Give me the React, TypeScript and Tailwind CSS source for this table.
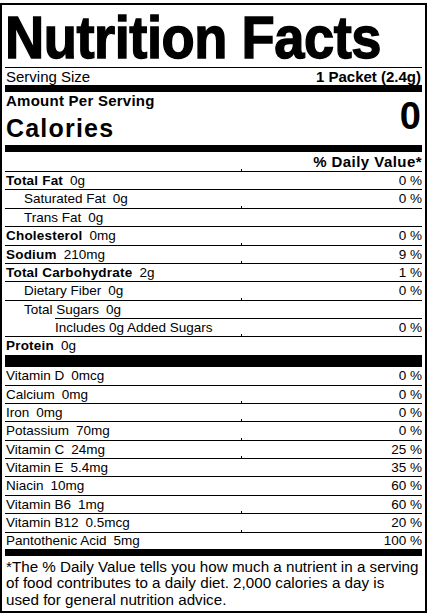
type Row = {
  name: string
  amount?: string
  dv?: string
  bold?: boolean
  indent?: 0 | 1 | 2
  tick?: boolean
}

const nutrients: Row[] = [
  { name: 'Total Fat', amount: '0g', dv: '0 %', bold: true },
  { name: 'Saturated Fat', amount: '0g', dv: '0 %', indent: 1, tick: true },
  { name: 'Trans Fat', amount: '0g', indent: 1 },
  { name: 'Cholesterol', amount: '0mg', dv: '0 %', bold: true, tick: true },
  { name: 'Sodium', amount: '210mg', dv: '9 %', bold: true, tick: true },
  { name: 'Total Carbohydrate', amount: '2g', dv: '1 %', bold: true },
  { name: 'Dietary Fiber', amount: '0g', dv: '0 %', indent: 1, tick: true },
]

const vitamins: Row[] = [
  { name: 'Vitamin D', amount: '0mcg', dv: '0 %' },
  { name: 'Calcium', amount: '0mg', dv: '0 %', tick: true },
  { name: 'Iron', amount: '0mg', dv: '0 %', tick: true },
  { name: 'Potassium', amount: '70mg', dv: '0 %', tick: true },
  { name: 'Vitamin C', amount: '24mg', dv: '25 %', tick: true },
  { name: 'Vitamin E', amount: '5.4mg', dv: '35 %' },
  { name: 'Niacin', amount: '10mg', dv: '60 %' },
  { name: 'Vitamin B6', amount: '1mg', dv: '60 %', tick: true },
  { name: 'Vitamin B12', amount: '0.5mcg', dv: '20 %', tick: true },
]

const Tick = () => <span className="absolute left-[236px] bottom-0 w-px h-[2px] bg-black" />

const NutrientRow = ({ row }: { row: Row }) => (
  <div
    className={`relative flex justify-between items-center h-[18.4px] leading-[17.4px] text-[13.5px] border-b border-black ${
      row.indent === 1 ? 'pl-[19px]' : 'pl-px'
    }`}
  >
    <span>
      <span className={row.bold ? 'font-bold tracking-[0.2px]' : ''}>{row.name}</span>
      {row.amount && <span className="ml-[7px]">{row.amount}</span>}
    </span>
    {row.dv && <span>{row.dv}</span>}
    {row.tick && <Tick />}
  </div>
)

export default function App() {
  return (
    <div className="bg-white min-h-[614px] pt-[3px]">
      <div className="w-[427px] border-2 border-black px-[3px] text-black font-['Liberation_Sans',Arial,sans-serif]">
        <div className="h-[63px] pt-[6.5px] border-b border-black">
          <h1 className="origin-left scale-x-[0.92] text-[59px] leading-[52px] font-bold tracking-[-0.5px] whitespace-nowrap [-webkit-text-stroke:1.4px_black]">
            Nutrition Facts
          </h1>
        </div>

        <div className="flex justify-between h-[17px] leading-[17px] text-[15px] px-px">
          <span>Serving Size</span>
          <span className="font-bold">1 Packet (2.4g)</span>
        </div>
        <div className="h-[7px] bg-black" />

        <div className="flex justify-between h-[53px] px-px">
          <div className="flex flex-col">
            <span className="text-[15px] leading-[17px] font-bold tracking-[0.25px]">Amount Per Serving</span>
            <span className="mt-[4px] text-[25px] leading-[30px] font-bold tracking-[1.2px]">Calories</span>
          </div>
          <span className="pt-[6px] text-[38px] leading-[36px] font-bold">0</span>
        </div>
        <div className="h-[7px] bg-black" />

        <div className="relative flex justify-end h-[20px] leading-[19px] text-[15px] font-bold tracking-[0.45px] border-b border-black">
          <span>% Daily Value*</span>
          <Tick />
        </div>

        {nutrients.map(row => (
          <NutrientRow key={row.name} row={row} />
        ))}

        <div className="flex h-[17.4px] leading-[17.4px] text-[13.5px] pl-[19px]">
          <span>Total Sugars</span>
          <span className="ml-[7px]">0g</span>
        </div>
        <div className="relative pl-[50px] border-b border-black">
          <div className="flex justify-between h-[18px] leading-[17px] text-[13.5px] border-t border-black">
            <span>Includes 0g Added Sugars</span>
            <span>0 %</span>
          </div>
          <Tick />
        </div>

        <div className="flex h-[18px] leading-[17.4px] text-[13.5px] pl-px">
          <span className="font-bold tracking-[0.2px]">Protein</span>
          <span className="ml-[7px]">0g</span>
        </div>
        <div className="h-[12px] bg-black" />

        {vitamins.map(row => (
          <NutrientRow key={row.name} row={row} />
        ))}
        <div className="flex justify-between h-[16px] leading-[16px] text-[13.5px] pl-px">
          <span>
            Pantothenic Acid<span className="ml-[7px]">5mg</span>
          </span>
          <span>100 %</span>
        </div>
        <div className="h-[7px] bg-black" />

        <p className="h-[55px] pt-[3px] pl-px text-[15.2px] leading-[16.5px] whitespace-nowrap">
          *The % Daily Value tells you how much a nutrient in a serving
          <br />
          of food contributes to a daily diet. 2,000 calories a day is
          <br />
          used for general nutrition advice.
        </p>
      </div>
    </div>
  )
}
